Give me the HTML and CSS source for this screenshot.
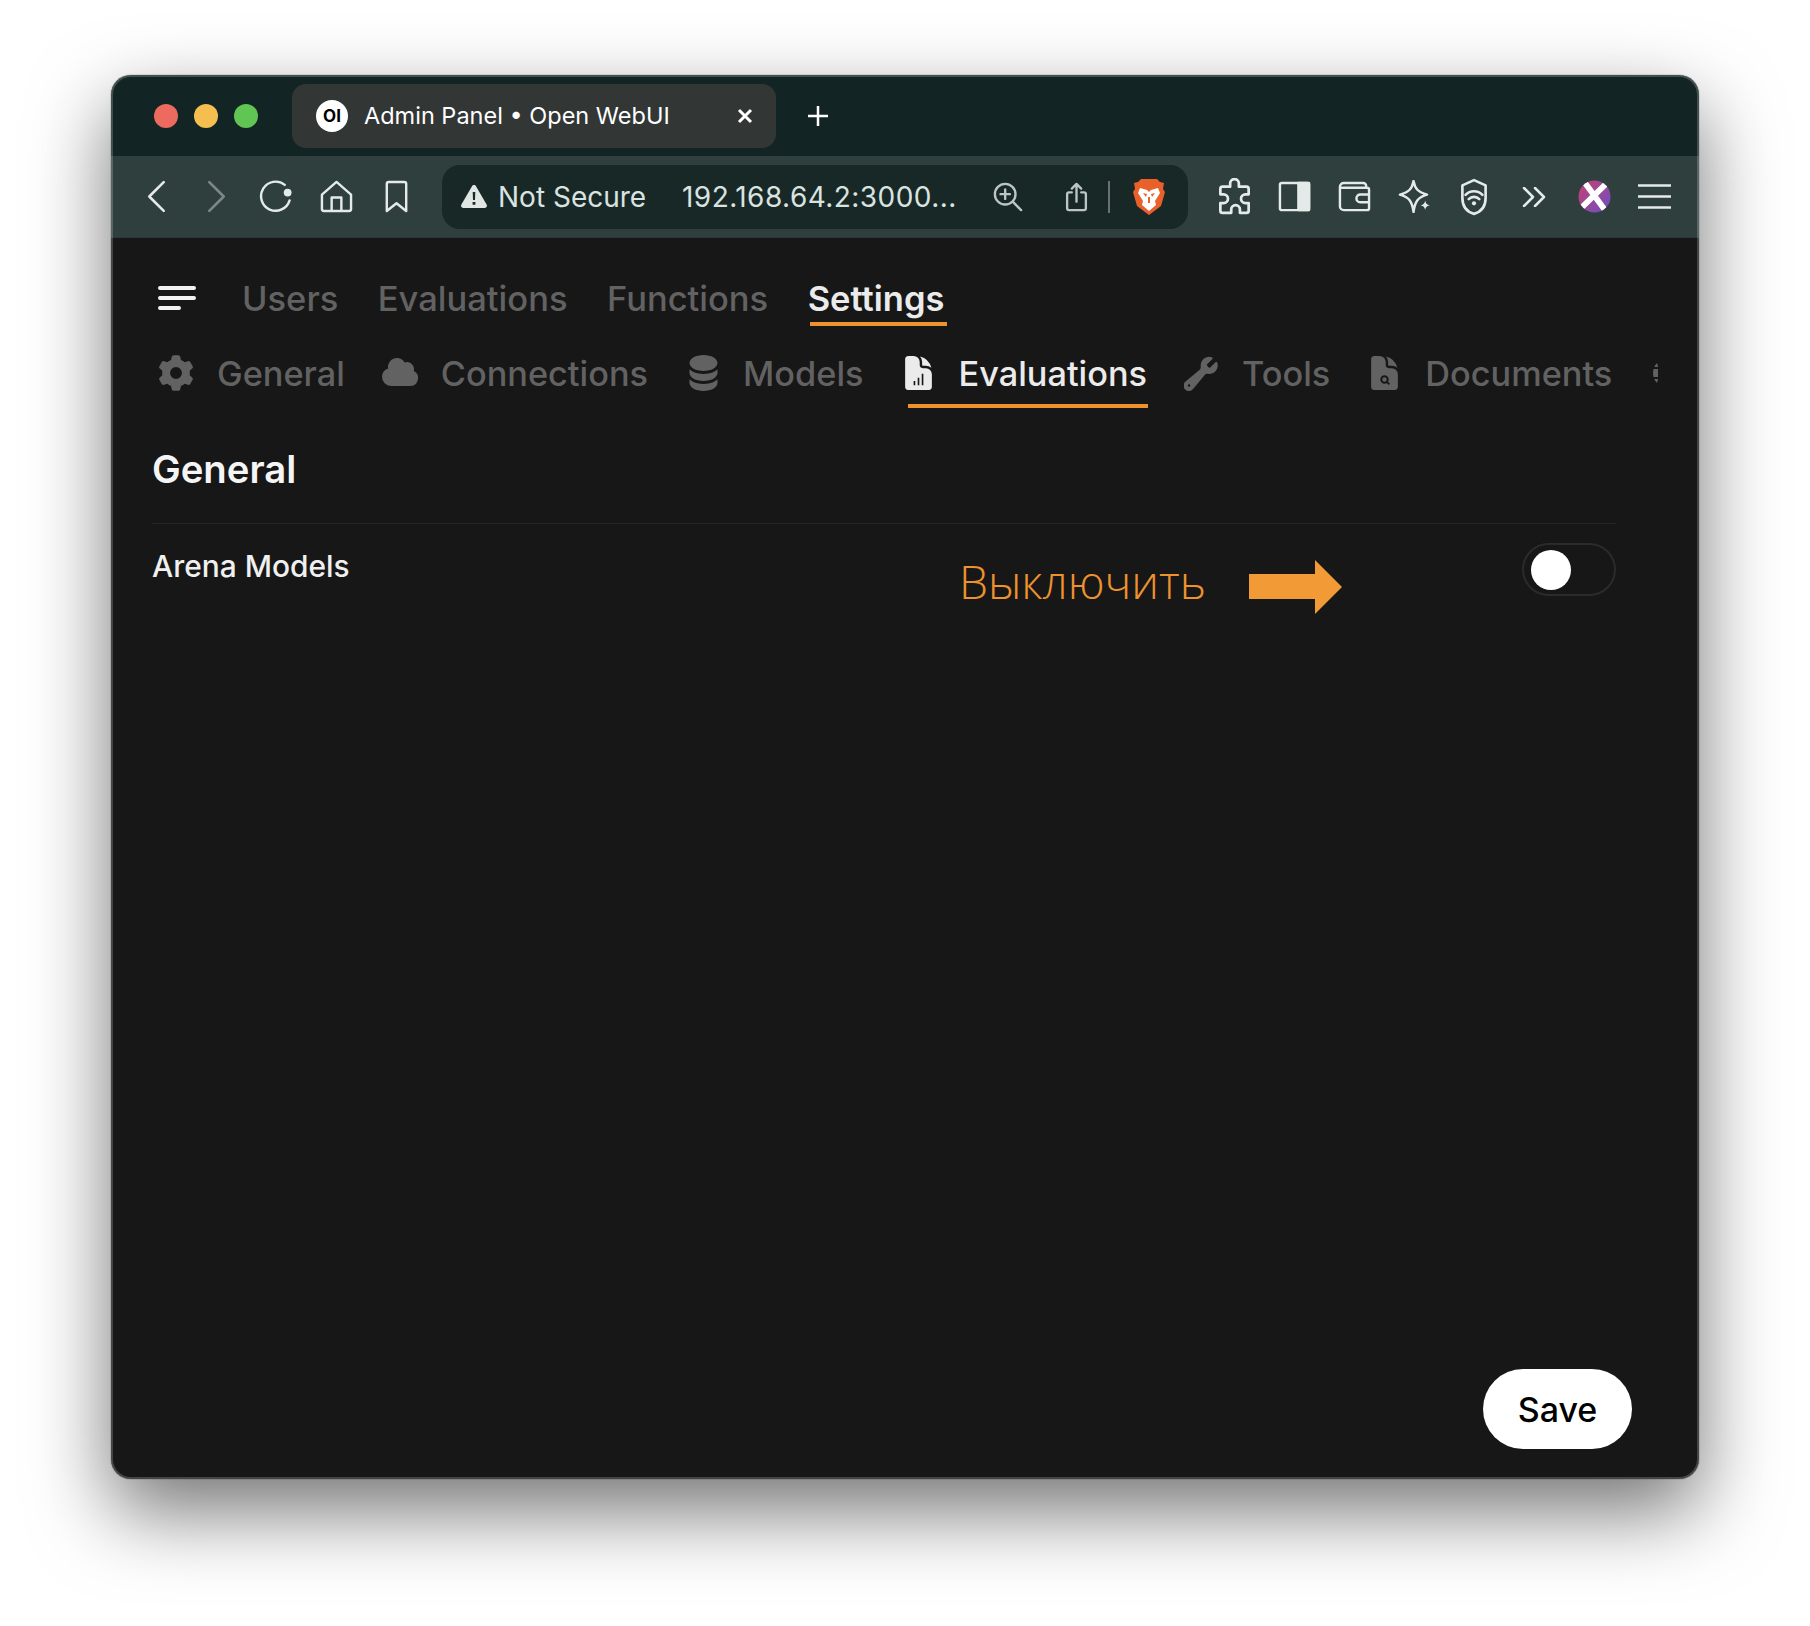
FILE: index.html
```html
<!DOCTYPE html>
<html lang="en">

<head>
    <meta charset="UTF-8">
    <title>Admin Panel • Open WebUI</title>
    <link rel="stylesheet" href="styles.css">
</head>

<body>
    <div class="window">
        <!-- tab strip -->
        <div class="titlebar">
            <div class="lights">
                <span class="light red"></span>
                <span class="light yellow"></span>
                <span class="light green"></span>
            </div>
            <div class="tab">
                <span class="favicon">OI</span>
                <span class="tab-title">Admin Panel • Open WebUI</span>
                <svg class="tab-close" viewBox="0 0 16 16"><path d="M2 2l12 12M14 2L2 14" /></svg>
            </div>
            <svg class="tab-new" viewBox="0 0 22 22"><path d="M11 1v20M1 11h20" /></svg>
        </div>

        <!-- browser toolbar -->
        <div class="toolbar">
            <div class="tool"><svg class="tool-icon" viewBox="0 0 32 32"><path d="M23 2L9 16l14 14" /></svg></div>
            <div class="tool dim"><svg class="tool-icon" viewBox="0 0 32 32"><path d="M9 2l14 14L9 30" /></svg></div>
            <div class="tool"><svg class="tool-icon reload" viewBox="0 0 36 34"><path d="M27 5A15 15 0 1 0 32 21" /><circle cx="30" cy="13" r="4" fill="#e4eae8" stroke="none" /></svg></div>
            <div class="tool"><svg class="tool-icon" viewBox="0 0 34 34"><path d="M2 15L17 2l15 13v15a2 2 0 0 1-2 2H4a2 2 0 0 1-2-2zM12 32V18h10v14" /></svg></div>
            <div class="tool"><svg class="tool-icon" viewBox="0 0 26 34"><path d="M3 4a2 2 0 0 1 2-2h16a2 2 0 0 1 2 2v28l-10-8-10 8z" /></svg></div>

            <div class="address">
                <svg class="warn" viewBox="0 0 26 23"><path d="M13 0c.9 0 1.600.5 2 1.200l10.600 18.300c.9 1.600-.2 3.500-2 3.500H2.400c-1.800 0-2.900-1.900-2-3.500L11 1.200C11.400.5 12.100 0 13 0z" fill="#dfe6e3" /><path d="M11.700 7h2.600l-.3 8h-2zM11.600 17h2.800v2.800h-2.800z" fill="#182827" /></svg>
                <span class="secure">Not Secure</span>
                <span class="url">192.168.64.2:3000...</span>
                <svg class="addr-icon zoom-in" viewBox="0 0 32 32"><circle cx="13" cy="13" r="11" /><path d="M21 21l9 9M13 8v10M8 13h10" /></svg>
                <svg class="addr-icon share" viewBox="0 0 24 32"><path d="M7 11H4a2 2 0 0 0-2 2v15a2 2 0 0 0 2 2h16a2 2 0 0 0 2-2V13a2 2 0 0 0-2-2h-3M12 21V2M7 7l5-5 5 5" /></svg>
                <span class="addr-sep"></span>
                <svg class="lion" viewBox="0 0 32 36">
                    <path d="M8 0h16l3 3 4 1-1 6 2 3-4 14-12 9-12-9L0 13l2-3-1-6 4-1z" fill="#e9602b" />
                    <path d="M7 9l7 2 2 2 2-2 7-2 2 5-5 8 1 4-7 6-7-6 1-4-5-8zM12 27l4-2 4 2-4 4z" fill="#fff" />
                    <path d="M10 14l4 1-1 3zM22 14l-4 1 1 3zM15 18h2v6h-2z" fill="#e9602b" />
                </svg>
            </div>

            <div class="tools-right">
                <div class="tool"><svg class="tool-icon puzzle" viewBox="2 0 30 34"><path d="M13 5a4 4 0 0 1 8 0v3h7a2 2 0 0 1 2 2v5h-3a4 4 0 0 0 0 8h3v7a2 2 0 0 1-2 2h-6v-3a4 4 0 0 0-8 0v3H6a2 2 0 0 1-2-2v-7h3a4 4 0 0 0 0-8H4v-5a2 2 0 0 1 2-2h7z" /></svg></div>
                <div class="tool"><svg class="tool-icon" viewBox="0 0 34 32"><rect x="2" y="2" width="30" height="28" rx="2" /><rect x="21" y="2" width="11" height="28" fill="#e4eae8" /></svg></div>
                <div class="tool"><svg class="tool-icon" viewBox="0 0 34 32"><path d="M2 6a4 4 0 0 1 4-4h20a3 3 0 0 1 3 3v2M2 6v20a4 4 0 0 0 4 4h24a2 2 0 0 0 2-2V9a2 2 0 0 0-2-2H5a3 3 0 0 1-3-1zM32 14H23a4 4 0 0 0 0 8h9" /></svg></div>
                <div class="tool"><svg class="tool-icon" viewBox="0 0 34 34"><path d="M16 1c1.500 8 4.500 11.500 14 14-9.500 2.500-12.500 7-14 18C14.500 22 11.500 17.500 2 15c9.500-2.500 12.500-6 14-14z" /><path class="solid" d="M28 21c.6 3 1.500 4.200 5 5-3.500.8-4.400 2-5 5-.6-3-1.500-4.200-5-5 3.500-.8 4.400-2 5-5z" /></svg></div>
                <div class="tool"><svg class="tool-icon shield" viewBox="3 0 26 36"><path d="M16 2l11 5v12c0 8-4 13-11 15C9 32 5 27 5 19V7zM8 16a11 11 0 0 1 16 0M11 20a7 7 0 0 1 10 0" /><circle class="solid" cx="16" cy="24" r="2" /></svg></div>
                <div class="tool"><svg class="tool-icon small" viewBox="0 0 24 20"><path d="M2 1l9 9-9 9M13 1l9 9-9 9" /></svg></div>
                <div class="tool">
                    <svg class="avatar" viewBox="0 0 34 34">
                        <defs>
                            <linearGradient id="avatar-fill" x1="0" y1="0" x2="1" y2="1">
                                <stop offset="0" stop-color="#c9406f" />
                                <stop offset="1" stop-color="#6a4fc4" />
                            </linearGradient>
                            <clipPath id="avatar-clip"><circle cx="17" cy="17" r="16.500" /></clipPath>
                        </defs>
                        <circle cx="17" cy="17" r="16.500" fill="url(#avatar-fill)" />
                        <path clip-path="url(#avatar-clip)" d="M5 0l25 34M31 2L2 30" stroke="#fff" stroke-width="6" fill="none" />
                    </svg>
                </div>
                <div class="tool"><svg class="tool-icon" viewBox="0 0 36 28"><path d="M0 2h36M0 14h36M0 26h36" /></svg></div>
            </div>
        </div>

        <!-- page -->
        <main class="page">
            <nav class="top-nav">
                <svg class="menu-icon" viewBox="0 0 38 26"><path d="M2 3h34M2 13h34M2 23h19" /></svg>
                <a class="top-link">Users</a>
                <a class="top-link">Evaluations</a>
                <a class="top-link">Functions</a>
                <a class="top-link active">Settings</a>
            </nav>

            <nav class="sub-nav">
                <a class="sub-link">
                    <svg class="sub-icon gear" viewBox="1.400 1 17.200 18"><path fill-rule="evenodd" clip-rule="evenodd" d="M7.840 1.804A1 1 0 018.820 1h2.360a1 1 0 01.980.804l.331 1.652a6.993 6.993 0 011.929 1.115l1.598-.540a1 1 0 011.186.447l1.180 2.044a1 1 0 01-.205 1.251l-1.267 1.113a7.047 7.047 0 010 2.228l1.267 1.113a1 1 0 01.206 1.250l-1.180 2.045a1 1 0 01-1.187.447l-1.598-.540a6.993 6.993 0 01-1.929 1.115l-.330 1.652a1 1 0 01-.980.804H8.820a1 1 0 01-.980-.804l-.331-1.652a6.993 6.993 0 01-1.929-1.115l-1.598.540a1 1 0 01-1.186-.447l-1.180-2.044a1 1 0 01.205-1.251l1.267-1.114a7.050 7.050 0 010-2.227L1.821 7.773a1 1 0 01-.206-1.250l1.180-2.045a1 1 0 011.187-.447l1.598.540A6.993 6.993 0 017.510 3.456l.330-1.652zM10 13a3 3 0 100-6 3 3 0 000 6z" /></svg>
                    General
                </a>
                <a class="sub-link tight">
                    <svg class="sub-icon cloud" viewBox="1 3 18 15"><path d="M1 12.500A4.500 4.500 0 005.500 17H15a4 4 0 001.866-7.539 3.504 3.504 0 00-4.504-4.272A4.500 4.500 0 004.060 8.235 4.502 4.502 0 001 12.500z" /></svg>
                    Connections
                </a>
                <a class="sub-link">
                    <svg class="sub-icon stack" viewBox="3 1 14 18"><path d="M10 1c3.866 0 7 1.790 7 4s-3.134 4-7 4-7-1.790-7-4 3.134-4 7-4zm5.694 8.130c.464-.264.910-.583 1.306-.952V10c0 2.210-3.134 4-7 4s-7-1.790-7-4V8.178c.396.370.842.688 1.306.953C5.838 10.006 7.854 10.500 10 10.500s4.162-.494 5.694-1.370zM3 13.179V15c0 2.210 3.134 4 7 4s7-1.790 7-4v-1.822c-.396.370-.842.688-1.306.953-1.532.875-3.548 1.369-5.694 1.369s-4.162-.494-5.694-1.370A7.009 7.009 0 013 13.179z" /></svg>
                    Models
                </a>
                <a class="sub-link active">
                    <svg class="sub-icon doc" viewBox="3.750 1.500 16.500 21">
                        <path d="M5.625 1.500c-1.036 0-1.875.840-1.875 1.875v17.250c0 1.035.840 1.875 1.875 1.875h12.750c1.035 0 1.875-.840 1.875-1.875V12.750A3.750 3.750 0 0016.500 9h-1.875a1.875 1.875 0 01-1.875-1.875V5.250A3.750 3.750 0 009 1.500H5.625z" />
                        <path d="M12.971 1.816A5.230 5.230 0 0114.250 5.250v1.875c0 .207.168.375.375.375H16.500a5.230 5.230 0 013.434 1.279 9.768 9.768 0 00-6.963-6.963z" />
                        <path class="cut" d="M9 17h1v2.500H9zM11.500 15h1v4.500h-1zM14 12.500h1v7h-1z" />
                    </svg>
                    Evaluations
                </a>
                <a class="sub-link tight">
                    <svg class="sub-icon wrench" viewBox="2 1 21 21.500"><path fill-rule="evenodd" clip-rule="evenodd" d="M12 6.750a5.250 5.250 0 016.775-5.025.750.750 0 01.313 1.248l-3.320 3.319c.063.475.276.934.641 1.299.365.365.824.578 1.300.640l3.318-3.319a.750.750 0 011.248.313 5.250 5.250 0 01-5.472 6.756c-1.018-.086-1.870.100-2.309.634L7.344 21.300A3.298 3.298 0 112.700 16.657l8.684-7.151c.533-.440.720-1.291.634-2.309A5.342 5.342 0 0112 6.750zM4.117 19.125a.750.750 0 01.750-.750h.008a.750.750 0 01.750.750v.008a.750.750 0 01-.750.750h-.008a.750.750 0 01-.750-.750v-.008z" /></svg>
                    Tools
                </a>
                <a class="sub-link">
                    <svg class="sub-icon doc" viewBox="3.750 1.500 16.500 21">
                        <path d="M5.625 1.500c-1.036 0-1.875.840-1.875 1.875v17.250c0 1.035.840 1.875 1.875 1.875h12.750c1.035 0 1.875-.840 1.875-1.875V12.750A3.750 3.750 0 0016.500 9h-1.875a1.875 1.875 0 01-1.875-1.875V5.250A3.750 3.750 0 009 1.500H5.625z" />
                        <path d="M12.971 1.816A5.230 5.230 0 0114.250 5.250v1.875c0 .207.168.375.375.375H16.500a5.230 5.230 0 013.434 1.279 9.768 9.768 0 00-6.963-6.963z" />
                        <circle class="ring" cx="12" cy="16" r="2" />
                        <path class="ring" d="M13.500 17.500l1.500 1.500" />
                    </svg>
                    Documents
                </a>
                <a class="sub-link">
                    <svg class="sub-icon globe" viewBox="0 0 24 24"><circle cx="12" cy="12" r="12" /><path class="cut-line" d="M0 8h24M0 16h24M3 2c3 5 3 15 0 20" /></svg>
                </a>
            </nav>

            <section class="settings">
                <h2 class="settings-title">General</h2>
                <div class="setting-row">
                    <span class="setting-label">Arena Models</span>
                    <span class="switch"><span class="knob"></span></span>
                    <div class="note">
                        <span class="note-text">Выключить</span>
                        <svg class="note-arrow" viewBox="0 0 93 54"><path d="M0 14h66V0l27 27-27 27V39H0z" /></svg>
                    </div>
                </div>
            </section>

            <button class="save" type="button">Save</button>
        </main>
    </div>
</body>

</html>
```

FILE: styles.css
```css
body {
    margin: 0;
    background-color: #fff;
    font-family: Inter, "Liberation Sans", sans-serif;
}

.window {
    display: flex;
    flex-direction: column;
    box-sizing: border-box;
    width: 1588px;
    height: 1404px;
    margin: 75px 0 147px 111px;
    border-radius: 20px;
    overflow: hidden;
    box-shadow: 0 0 1px #000, 0 32px 80px rgba(0, 0, 0, 0.55);
    position: relative;
}

.window::after {
    content: "";
    position: absolute;
    inset: 0;
    border-radius: 20px;
    border: 2px solid rgba(255, 255, 255, 0.2);
    pointer-events: none;
}

/* tab strip */
.titlebar {
    display: flex;
    align-items: center;
    height: 81px;
    padding-left: 43px;
    background-color: #122423;
}

.lights {
    display: flex;
    gap: 16px;
    margin-right: 34px;
}

.light {
    width: 24px;
    height: 24px;
    border-radius: 50%;
}

.red {
    background-color: #ec6a5e;
}

.yellow {
    background-color: #f4bf4f;
}

.green {
    background-color: #61c554;
}

.tab {
    display: flex;
    align-items: center;
    box-sizing: border-box;
    width: 484px;
    height: 64px;
    padding: 0 24px;
    border-radius: 14px;
    background-color: #323635;
    color: #fff;
}

.favicon {
    display: flex;
    align-items: center;
    justify-content: center;
    width: 32px;
    height: 32px;
    margin-right: 16px;
    border-radius: 50%;
    background-color: #fff;
    color: #000;
    font-size: 17px;
    font-weight: 700;
}

.tab-title {
    font-size: 23.500px;
    white-space: nowrap;
}

.tab-close {
    width: 16px;
    height: 16px;
    margin-left: auto;
    margin-right: -1px;
    fill: none;
    stroke: #fff;
    stroke-width: 3;
}

.tab-new {
    width: 22px;
    height: 22px;
    margin-left: 31px;
    fill: none;
    stroke: #fff;
    stroke-width: 2.500;
}

/* browser toolbar */
.toolbar {
    display: flex;
    align-items: center;
    height: 81px;
    padding-left: 15px;
    border-bottom: 1px solid #2a3938;
    background-color: #2e3f3e;
}

.tools-right {
    display: flex;
    margin-left: 16px;
}

.tool {
    display: flex;
    align-items: center;
    justify-content: center;
    width: 60px;
}

.tool-icon {
    width: 33px;
    height: 33px;
    fill: none;
    stroke: #e4eae8;
    stroke-width: 2.500;
    stroke-linecap: round;
    stroke-linejoin: round;
}

.tool-icon.reload {
    width: 36px;
}

.tool-icon.puzzle {
    width: 33px;
    height: 37px;
}

.tool-icon.shield {
    width: 30px;
    height: 38px;
}

.tool-icon.small {
    width: 24px;
    height: 20px;
}

.tool-icon .solid {
    fill: #e4eae8;
    stroke: none;
}

.dim .tool-icon {
    stroke: #7b8887;
}

.avatar {
    width: 33px;
    height: 33px;
}

.address {
    display: flex;
    align-items: center;
    box-sizing: border-box;
    width: 746px;
    height: 64px;
    margin-left: 16px;
    padding-left: 19px;
    border-radius: 18px;
    background-color: #182827;
}

.warn {
    width: 26px;
    height: 23px;
    margin-right: 11px;
}

.secure,
.url {
    color: #dbe3e0;
    font-size: 28px;
    white-space: nowrap;
}

.secure {
    width: 184px;
}

.url {
    width: 311px;
    letter-spacing: 0.450px;
}

.addr-icon {
    fill: none;
    stroke: #bcc5c2;
    stroke-width: 2.500;
    stroke-linecap: round;
    stroke-linejoin: round;
}

.zoom-in {
    width: 30px;
    height: 30px;
}

.share {
    width: 23px;
    height: 30px;
    margin-left: 42px;
}

.addr-sep {
    width: 2px;
    height: 32px;
    margin: 0 23px 0 20px;
    background-color: #66736f;
}

.lion {
    width: 32px;
    height: 36px;
}

/* page */
.page {
    display: flex;
    flex-direction: column;
    flex: 1;
    padding: 36px 67px 30px 41px;
    background-color: #171717;
}

.top-nav {
    display: flex;
    align-items: center;
    gap: 39.500px;
    height: 48px;
}

.menu-icon {
    width: 38px;
    height: 26px;
    margin: 0 6.500px 0 6px;
    fill: none;
    stroke: #f2f2f2;
    stroke-width: 4;
    stroke-linecap: round;
}

.top-link,
.sub-link {
    position: relative;
    color: #626262;
    font-size: 34.300px;
    font-weight: 500;
    white-space: nowrap;
}

.top-link {
    font-size: 34.500px;
}

.top-link.active,
.sub-link.active {
    color: #ebebeb;
}

.top-link.active {
    font-weight: 600;
}

.top-link.active::after {
    content: "";
    position: absolute;
    left: 2px;
    right: -3px;
    bottom: -7px;
    height: 4px;
    background-color: #ee922e;
}

.sub-nav {
    display: flex;
    align-items: flex-start;
    gap: 41px;
    width: 1499px;
    height: 62px;
    margin-top: 27px;
    margin-left: 7px;
    overflow: hidden;
}

.sub-link {
    display: flex;
    align-items: center;
    height: 48px;
}

.sub-link.tight {
    margin-left: -4px;
}

.sub-link.active::after {
    content: "";
    position: absolute;
    left: 3px;
    right: -1px;
    bottom: -11px;
    height: 4px;
    background-color: #ee922e;
}

.sub-icon {
    flex: none;
    fill: #626262;
}

.sub-icon.gear {
    width: 34px;
    height: 36px;
    margin-right: 24px;
}

.sub-icon.cloud {
    width: 36px;
    height: 30px;
    margin-right: 23px;
}

.sub-icon.stack {
    width: 29px;
    height: 36px;
    margin-right: 25px;
}

.sub-icon.doc {
    width: 27px;
    height: 34px;
    margin-right: 27px;
}

.sub-icon.wrench {
    width: 35px;
    height: 35px;
    margin-right: 23px;
}

.sub-icon.globe {
    width: 30px;
    height: 34px;
}

.active .sub-icon {
    fill: #ebebeb;
}

.sub-icon .cut {
    fill: #171717;
}

.sub-icon .ring {
    fill: none;
    stroke: #171717;
    stroke-width: 1.200;
}

.sub-icon .cut-line {
    fill: none;
    stroke: #171717;
    stroke-width: 1.500;
}

.settings {
    width: 1464px;
    margin-top: 35px;
}

.settings-title {
    margin: 0;
    padding-bottom: 31px;
    border-bottom: 1px solid #262626;
    color: #f5f5f5;
    font-size: 38.300px;
    font-weight: 600;
    line-height: 46px;
}

.setting-row {
    position: relative;
    display: flex;
    justify-content: space-between;
    align-items: flex-start;
    padding-top: 19px;
}

.setting-label {
    margin-top: -1px;
    color: #f0f0f0;
    font-size: 29.900px;
    font-weight: 500;
    line-height: 48px;
}

.switch {
    display: flex;
    align-items: center;
    box-sizing: border-box;
    width: 94px;
    height: 53px;
    padding-left: 7px;
    border: 2px solid #2b2b2b;
    border-radius: 27px;
}

.knob {
    width: 40px;
    height: 40px;
    border-radius: 50%;
    background-color: #fff;
}

/* annotation drawn over the screenshot */
.note {
    position: absolute;
    top: 31px;
    left: 807px;
    display: flex;
    align-items: flex-start;
    gap: 43px;
}

.note-text {
    color: #ee922e;
    font-family: "Open Sans", sans-serif;
    font-size: 46.200px;
    font-weight: 300;
    line-height: 54px;
}

.note-arrow {
    width: 93px;
    height: 54px;
    margin-top: 5px;
    fill: #f29a35;
}

.save {
    align-self: flex-end;
    width: 149px;
    height: 80px;
    margin-top: auto;
    padding: 0;
    border: none;
    border-radius: 40px;
    background-color: #fff;
    color: #000;
    font-family: inherit;
    font-size: 34px;
    font-weight: 500;
}
```
